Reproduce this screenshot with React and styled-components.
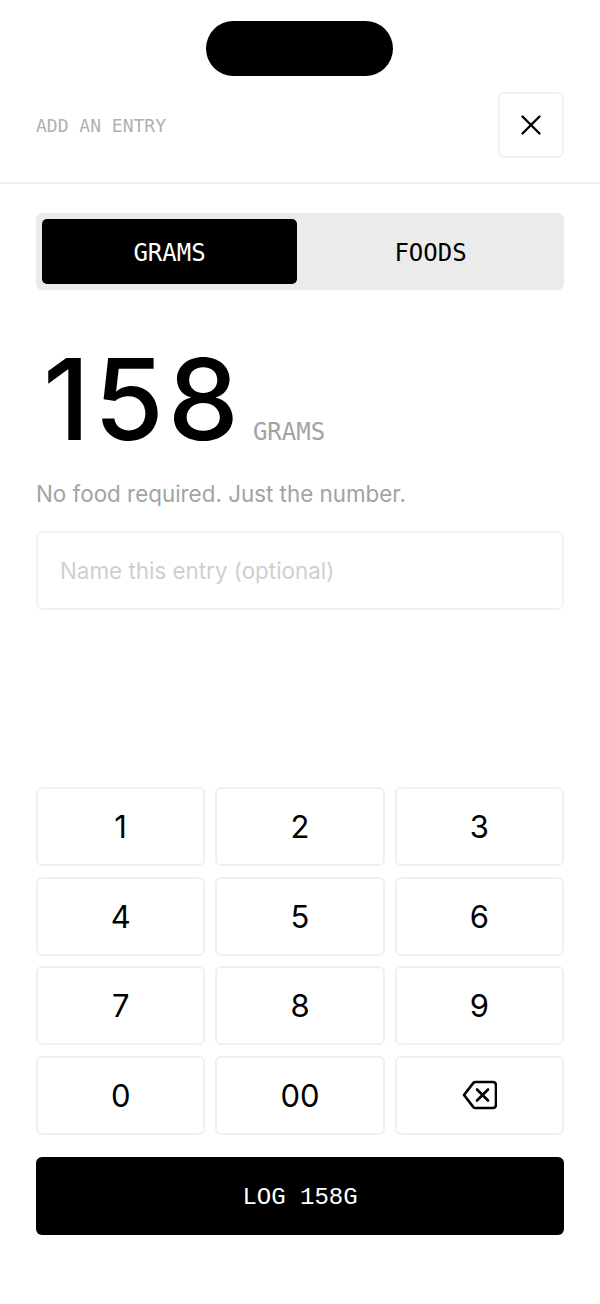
import React from 'react';
import styled, { createGlobalStyle } from 'styled-components';
import { X } from 'lucide-react';

const GlobalStyle = createGlobalStyle`
  html, body {
    margin: 0;
    padding: 0;
    background: #fff;
  }
  * {
    box-sizing: border-box;
  }
`;

const mono = `"DejaVu Sans Mono", "Liberation Mono", monospace`;
const sans = `Inter, "Liberation Sans", sans-serif`;

const Screen = styled.div`
  width: 600px;
  height: 1304px;
  background: #fff;
  display: flex;
  flex-direction: column;
  overflow: hidden;
`;

const StatusBar = styled.div`
  height: 92px;
  padding: 21px 1px 0 0;
  display: flex;
  justify-content: center;
`;

const Island = styled.div`
  width: 187px;
  height: 55px;
  border-radius: 28px;
  background: #000;
`;

const Header = styled.div`
  height: 92px;
  padding: 0 36px 24px;
  display: flex;
  align-items: flex-start;
  justify-content: space-between;
  border-bottom: 2px solid #f0f0f0;
`;

const HeaderLabel = styled.div`
  font-family: ${mono};
  font-size: 18px;
  line-height: 67px;
  color: #b0b0b0;
`;

const CloseButton = styled.button`
  width: 66px;
  height: 66px;
  padding: 0;
  background: #fff;
  border: 2px solid #f2f2f2;
  border-radius: 6px;
  color: #000;
  display: flex;
  align-items: center;
  justify-content: center;
`;

const Body = styled.div`
  flex: 1;
  padding: 29px 36px 0;
  display: flex;
  flex-direction: column;
`;

const Tabs = styled.div`
  height: 77px;
  padding: 6px;
  background: #ebebeb;
  border-radius: 6px;
  display: grid;
  grid-template-columns: 1fr 1fr;
  gap: 6px;
`;

const Tab = styled.div`
  border-radius: 5px;
  padding-top: 3px;
  display: flex;
  align-items: center;
  justify-content: center;
  font-family: ${mono};
  font-size: 24px;
  color: ${({ $active }) => ($active ? '#fff' : '#000')};
  background: ${({ $active }) => ($active ? '#000' : 'transparent')};
`;

const Amount = styled.div`
  margin-top: 51px;
  height: 116px;
  padding-left: 7px;
  display: flex;
  align-items: baseline;
  gap: 10px;
`;

const AmountValue = styled.span`
  font-family: ${sans};
  font-size: 113px;
  font-weight: 500;
  line-height: 116px;
  letter-spacing: 4px;
  color: #000;
`;

const AmountUnit = styled.span`
  font-family: ${mono};
  font-size: 24px;
  color: #a3a3a3;
`;

const Hint = styled.div`
  margin-top: 21px;
  font-family: ${sans};
  font-size: 22.4px;
  line-height: 32px;
  color: #a3a3a3;
`;

const NameField = styled.div`
  margin-top: 21px;
  height: 79px;
  padding: 0 22px;
  border: 2px solid #f2f2f2;
  border-radius: 6px;
  display: flex;
  align-items: center;
  font-family: ${sans};
  font-size: 22.4px;
  color: #cfcfcf;
`;

const Keypad = styled.div`
  margin-top: 177px;
  display: grid;
  grid-template-columns: repeat(3, 1fr);
  grid-auto-rows: 79px;
  gap: 10.5px 10px;
`;

const Key = styled.div`
  border: 2px solid #f0f0f0;
  border-radius: 6px;
  display: flex;
  align-items: center;
  justify-content: center;
  font-family: ${sans};
  font-size: 31px;
  color: #000;
`;

const LogButton = styled.div`
  margin-top: 22px;
  height: 78px;
  padding-top: 3px;
  border-radius: 6px;
  background: #000;
  color: #fff;
  display: flex;
  align-items: center;
  justify-content: center;
  font-family: "Liberation Mono", monospace;
  font-size: 24px;
`;

const keys = ['1', '2', '3', '4', '5', '6', '7', '8', '9', '0', '00'];

const BackspaceIcon = () => (
  <svg width="36" height="30" viewBox="-1 0 36 30" fill="none" stroke="#000" strokeWidth="2.6" strokeLinejoin="round" strokeLinecap="round">
    <path d="M13.5 2H31a3 3 0 0 1 3 3v20a3 3 0 0 1-3 3H13.5a3 3 0 0 1-2.1-.9L2 15l9.4-12.1A3 3 0 0 1 13.5 2z" />
    <path d="M15 9.5l11 11M26 9.5l-11 11" />
  </svg>
);

export default function App() {
  return (
    <Screen>
      <GlobalStyle />
      <StatusBar>
        <Island />
      </StatusBar>
      <Header>
        <HeaderLabel>ADD AN ENTRY</HeaderLabel>
        <CloseButton>
          <X size={34} strokeWidth={1.7} />
        </CloseButton>
      </Header>
      <Body>
        <Tabs>
          <Tab $active>GRAMS</Tab>
          <Tab>FOODS</Tab>
        </Tabs>
        <Amount>
          <AmountValue>158</AmountValue>
          <AmountUnit>GRAMS</AmountUnit>
        </Amount>
        <Hint>No food required. Just the number.</Hint>
        <NameField>Name this entry (optional)</NameField>
        <Keypad>
          {keys.map((k) => (
            <Key key={k}>{k}</Key>
          ))}
          <Key>
            <BackspaceIcon />
          </Key>
        </Keypad>
        <LogButton>LOG 158G</LogButton>
      </Body>
    </Screen>
  );
}
